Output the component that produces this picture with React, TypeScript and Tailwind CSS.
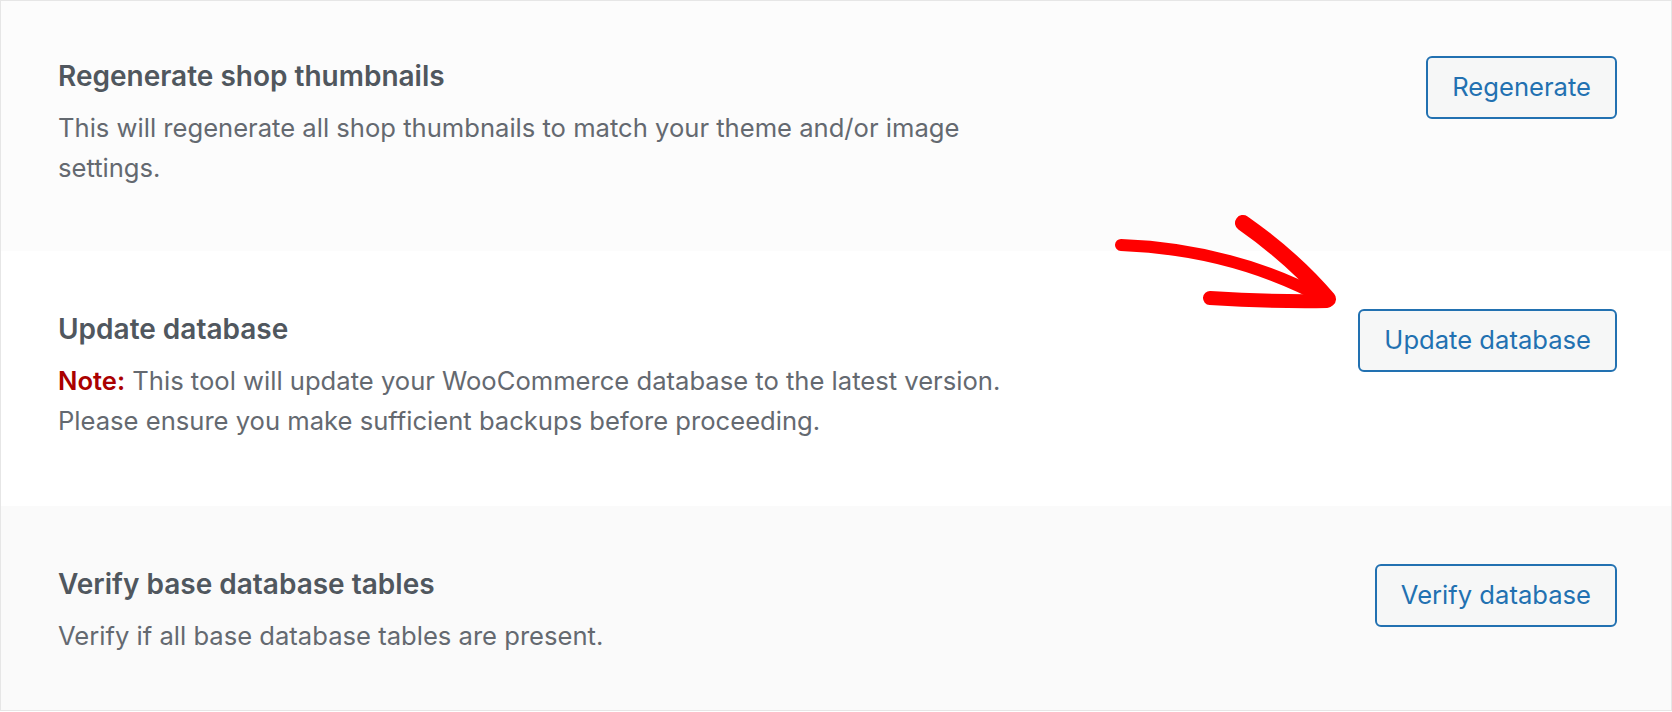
import React from 'react'

type Tool = {
  name: string
  description: React.ReactNode
  button: string
  rowClass: string
}

const tools: Tool[] = [
  {
    name: 'Regenerate shop thumbnails',
    description: 'This will regenerate all shop thumbnails to match your theme and/or image settings.',
    button: 'Regenerate',
    rowClass: 'bg-[#fcfcfc] pt-[55px] pb-[63px]',
  },
  {
    name: 'Update database',
    description: (
      <>
        <strong className="font-semibold text-[#aa0000]">Note:</strong> This tool will update your
        WooCommerce database to the latest version. Please ensure you make sufficient backups before
        proceeding.
      </>
    ),
    button: 'Update database',
    rowClass: 'bg-white pt-[58px] pb-[65px]',
  },
  {
    name: 'Verify base database tables',
    description: 'Verify if all base database tables are present.',
    button: 'Verify database',
    rowClass: 'bg-[#fafafa] pt-[58px] flex-1',
  },
]

function Arrow() {
  return (
    <svg
      className="absolute left-0 top-0 pointer-events-none"
      width="1672"
      height="712"
      viewBox="0 0 1672 712"
      fill="none"
    >
      <g stroke="#ff0000" strokeLinecap="round" strokeLinejoin="round">
        <path d="M1120 244 Q1232 248 1326 299" strokeWidth="12" />
        <path d="M1242 222 Q1292 257 1327 298" strokeWidth="16" />
        <path d="M1209 297 Q1272 301 1326 300" strokeWidth="14" />
      </g>
    </svg>
  )
}

export default function App() {
  return (
    <div
      className="relative w-[1672px] h-[711px] border border-[#e6e6e6] flex flex-col overflow-hidden"
      style={{ fontFamily: 'Inter, "Noto Sans", sans-serif' }}
    >
      {tools.map((tool) => (
        <div key={tool.name} className={`flex justify-between pl-[57px] pr-[54px] ${tool.rowClass}`}>
          <div className="w-[1000px]">
            <div className="text-[28px] leading-[40px] font-semibold text-[#50575e]">{tool.name}</div>
            <p className="mt-[12px] text-[25.6px] leading-[40px] text-[#646970]">{tool.description}</p>
          </div>
          <div>
            <button
              type="button"
              className="h-[63px] px-[24px] rounded-[6px] border-2 border-[#2271b1] bg-[#f6f7f7] text-[25.6px] text-[#2271b1] whitespace-nowrap"
            >
              {tool.button}
            </button>
          </div>
        </div>
      ))}
      <Arrow />
    </div>
  )
}
